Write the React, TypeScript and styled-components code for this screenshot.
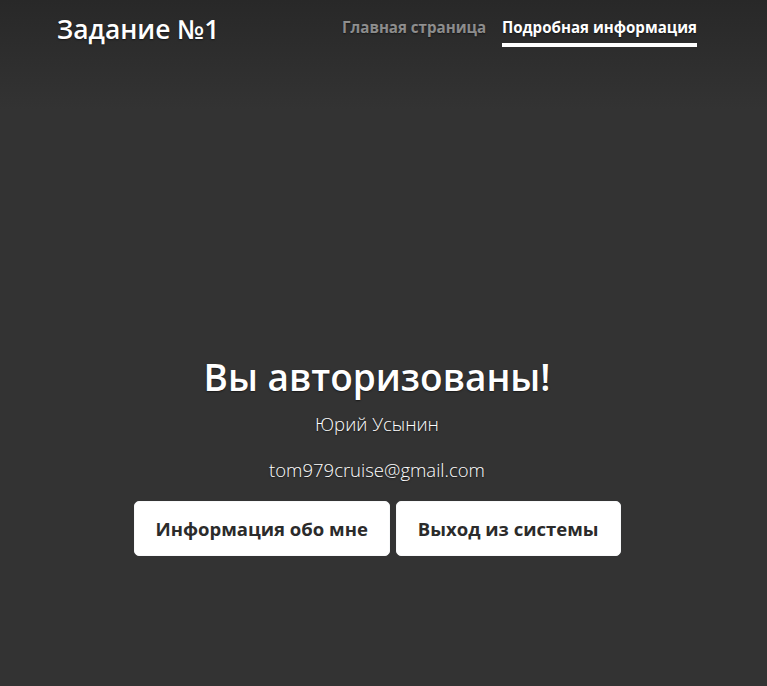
import React from "react";
import styled, { createGlobalStyle } from "styled-components";

const GlobalStyle = createGlobalStyle`
  html, body {
    margin: 0;
    padding: 0;
    height: 100%;
  }
  body {
    background-color: #333333;
    background-image: linear-gradient(to bottom, #282828 0px, #333333 110px);
    background-repeat: no-repeat;
    color: #ffffff;
    font-family: "Open Sans", "Noto Sans", "Liberation Sans", sans-serif;
    text-shadow: 0 0.05rem 0.1rem rgba(0, 0, 0, 0.5);
  }
  #root {
    min-height: 100%;
  }
`;

const Shell = styled.div`
  min-height: 686px;
  padding-right: 13px;
  box-sizing: border-box;
`;

const Cover = styled.div`
  width: 640px;
  margin: 0 auto;
  padding-top: 11px;
  display: flex;
  flex-direction: column;
`;

const Header = styled.header`
  display: flex;
  justify-content: space-between;
  align-items: center;
  height: 36px;
`;

const Brand = styled.h3`
  margin: 0;
  font-size: 26.4px;
  font-weight: 600;
  line-height: 36px;
  color: #ffffff;
`;

const Nav = styled.nav`
  display: flex;
  gap: 16px;
`;

const NavLink = styled.a<{ $active?: boolean }>`
  display: block;
  padding: 4px 0;
  font-size: 15.1px;
  font-weight: 700;
  line-height: 24px;
  text-decoration: none;
  color: ${(p) => (p.$active ? "#ffffff" : "rgba(255, 255, 255, 0.5)")};
  border-bottom: 4px solid ${(p) => (p.$active ? "#ffffff" : "transparent")};
  cursor: pointer;
`;

const Main = styled.main`
  margin-top: 306px;
  display: flex;
  flex-direction: column;
  align-items: center;
  text-align: center;
`;

const Title = styled.h1`
  margin: 0 0 8px;
  font-size: 37px;
  font-weight: 600;
  line-height: 48px;
`;

const Lead = styled.p`
  margin: 0 0 16px;
  font-size: 18.5px;
  font-weight: 300;
  line-height: 30px;
`;

const Actions = styled.div`
  display: flex;
  gap: 6px;
`;

const Button = styled.button`
  height: 55px;
  padding: 0 21px;
  border: 1px solid #f8f9fa;
  border-radius: 5px;
  background: #ffffff;
  color: #2b2b2b;
  font-family: inherit;
  font-size: 18.5px;
  font-weight: 700;
  line-height: 30px;
  text-shadow: none;
  cursor: pointer;
`;

export default function App() {
  return (
    <>
      <GlobalStyle />
      <Shell>
        <Cover>
          <Header>
            <Brand>Задание №1</Brand>
            <Nav>
              <NavLink>Главная страница</NavLink>
              <NavLink $active>Подробная информация</NavLink>
            </Nav>
          </Header>
          <Main>
            <Title>Вы авторизованы!</Title>
            <Lead>Юрий Усынин</Lead>
            <Lead>tom979cruise@gmail.com</Lead>
            <Actions>
              <Button>Информация обо мне</Button>
              <Button>Выход из системы</Button>
            </Actions>
          </Main>
        </Cover>
      </Shell>
    </>
  );
}
